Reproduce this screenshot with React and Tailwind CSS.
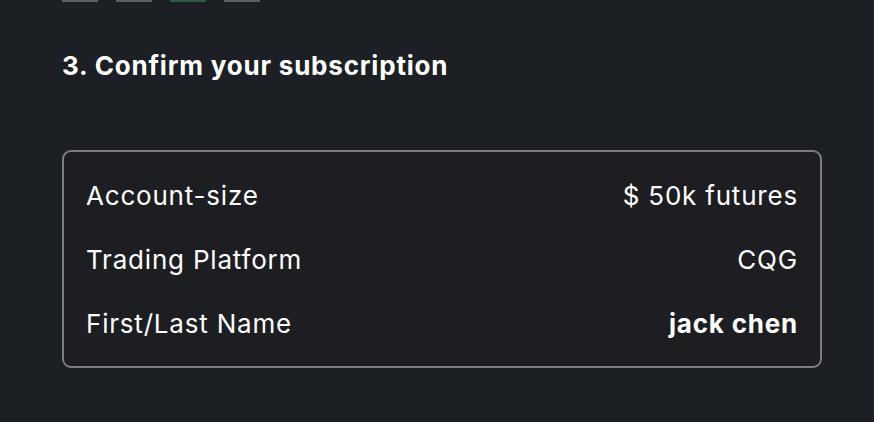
export default function App() {
  const rows = [
    { label: 'Account-size', value: '$ 50k futures' },
    { label: 'Trading Platform', value: 'CQG' },
    { label: 'First/Last Name', value: 'jack chen', bold: true },
  ]

  return (
    <div
      className="w-[874px] h-[422px] overflow-hidden bg-[#1c1f23] text-white px-[62px]"
      style={{ fontFamily: 'Inter, "Noto Sans", sans-serif' }}
    >
      {/* Steps */}
      <div className="flex gap-[18px]">
        <div className="w-9 h-[2px] bg-[#5b5f64]" />
        <div className="w-9 h-[2px] bg-[#5b5f64]" />
        <div className="w-9 h-[2px] bg-[#2e5a40]" />
        <div className="w-9 h-[2px] bg-[#5b5f64]" />
      </div>

      <h2 className="mt-[46px] text-[26px] leading-[36px] font-bold tracking-[0.8px]">3. Confirm your subscription</h2>

      {/* Summary */}
      <div className="mt-[66px] border-2 border-[#7d7d7f] rounded-[9px] bg-[#1c1e22] px-[22px] py-[11px] w-[760px]">
        {rows.map((row) => (
          <div key={row.label} className="flex items-center justify-between h-[64px] text-[26px] tracking-[0.8px]">
            <span>{row.label}</span>
            <span className={row.bold ? 'font-bold' : ''}>{row.value}</span>
          </div>
        ))}
      </div>
    </div>
  )
}
